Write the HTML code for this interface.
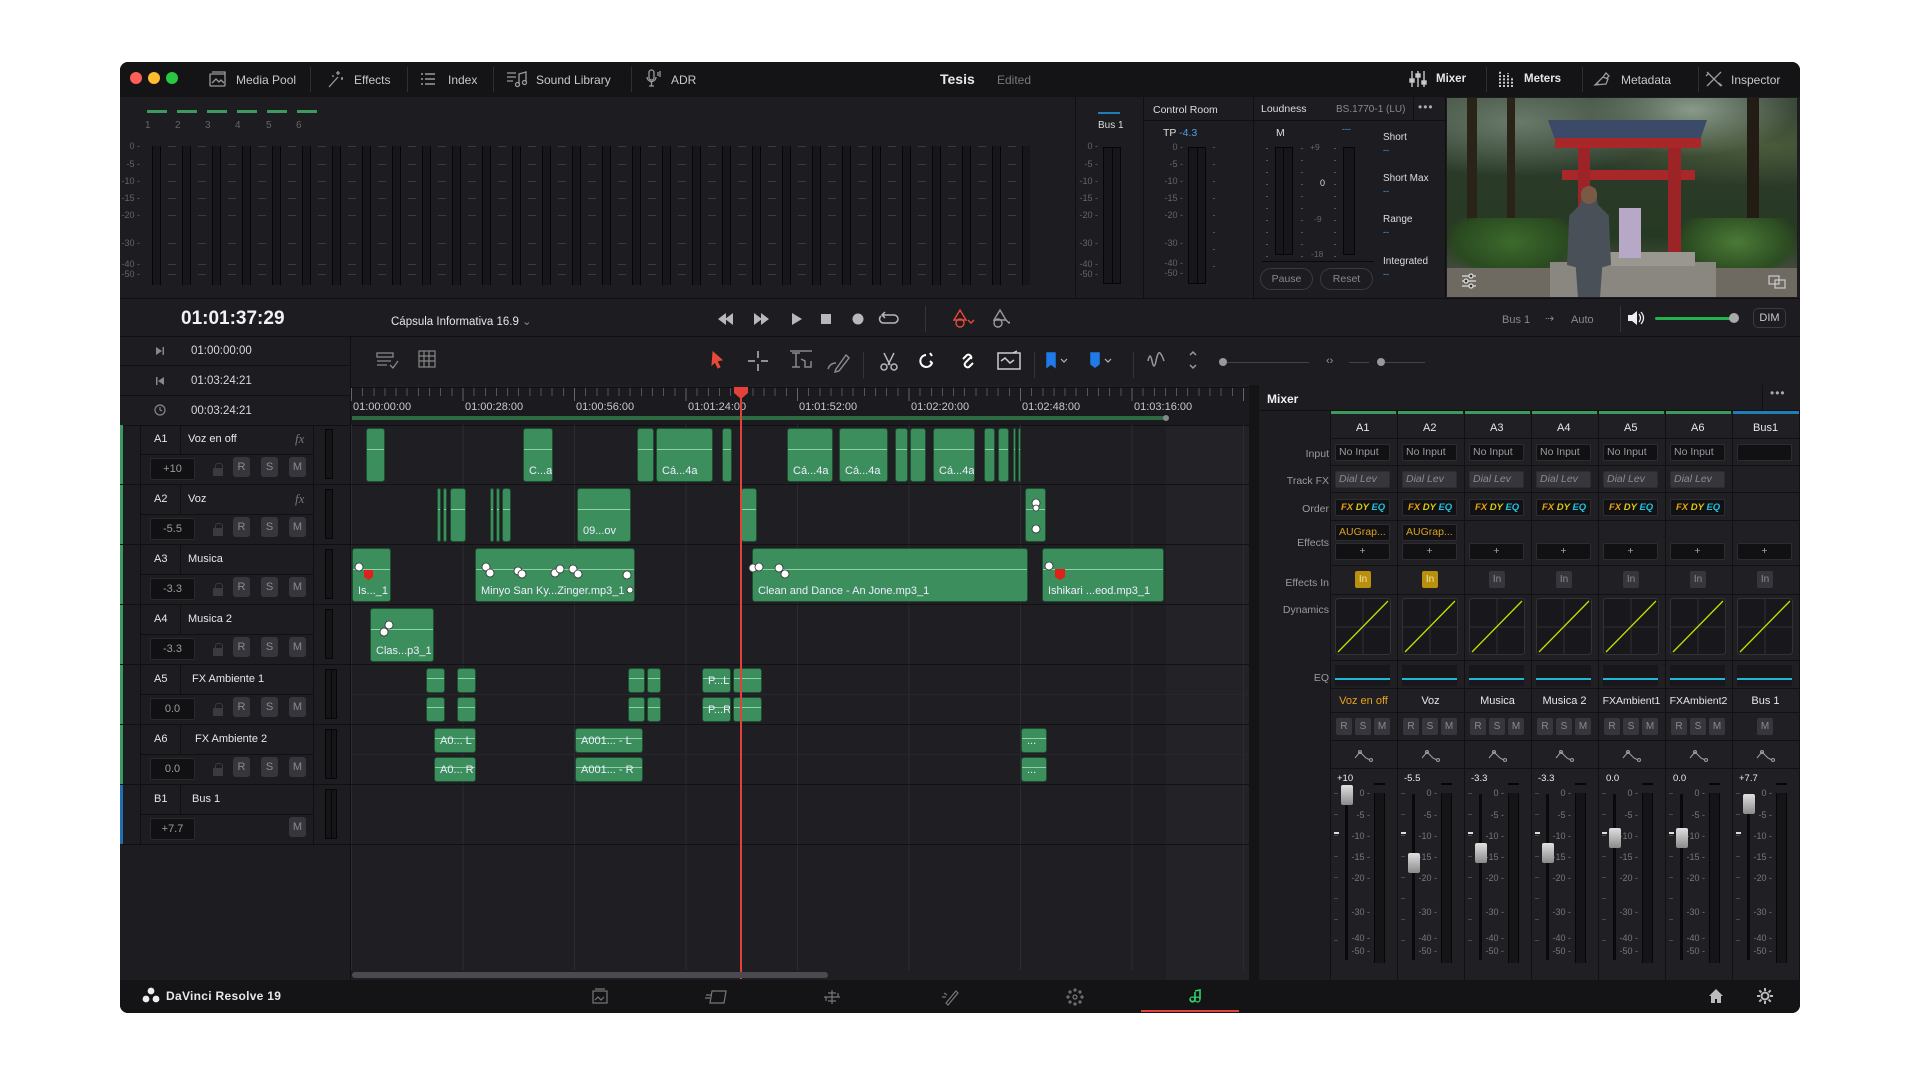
<!DOCTYPE html>
<html><head><meta charset="utf-8">
<style>
*{margin:0;padding:0;box-sizing:border-box}
body{width:1920px;height:1080px;background:#fff;position:relative;overflow:hidden;font-family:"Liberation Sans",sans-serif;color:#c8c8cc;font-size:12px}
.a{position:absolute}
.win{left:120px;top:62px;width:1680px;height:951px;background:#1c1c21;border-radius:8px;overflow:hidden}
.t{position:absolute;white-space:nowrap}
.sep{position:absolute;width:1px;background:#2e2e34}
.hl{position:absolute;height:1px;background:#101013}
.c{position:absolute;background:#3c8e5d;border:1px solid #1d4f31;border-radius:3px;overflow:hidden}
.c::before{content:"";position:absolute;left:0;right:0;top:38%;height:1px;background:#8fd2a8}
.c span{position:absolute;left:5px;bottom:4px;color:#eef;font-size:11px;white-space:nowrap}
.btn{position:absolute;width:17px;height:20px;background:#36363c;border-radius:3px;color:#8a8a90;font-size:11px;text-align:center;line-height:20px}
.vol{position:absolute;width:45px;height:22px;background:#111114;border:1px solid #2a2a2e;border-radius:2px;color:#9a9aa0;font-size:11px;text-align:center;line-height:20px}
.lk{position:absolute;width:10px;height:8px;background:#3a3a40;border-radius:1px}
.lk::before{content:"";position:absolute;left:2px;top:-5px;width:6px;height:6px;border:1.5px solid #3a3a40;border-bottom:none;border-radius:3px 3px 0 0}
.mb{position:absolute;left:5px;width:55px;height:17px;background:#111114;border:1px solid #2c2c31;border-radius:2px;font-size:10.5px;line-height:15px;padding-left:3px;color:#9a9aa0;white-space:nowrap;overflow:hidden}
.lab{position:absolute;right:0;width:70px;text-align:right;font-size:10.5px;color:#9a9aa0}
.rs{position:absolute;width:16px;height:17px;background:#36363c;border-radius:2px;font-size:10px;color:#8a8a90;text-align:center;line-height:17px}
.sc{position:absolute;font-size:9px;color:#77777d;text-align:right;width:22px}
.dl{position:absolute;height:1px;background:repeating-linear-gradient(90deg,transparent 0 16px,#3a3a40 16px 24px,transparent 24px 30px)}
</style></head><body>
<div class="a win">
<!-- title bar -->
<div class="a" style="left:0;top:0;width:1680px;height:35px;background:#141417"></div>
<div class="a" style="left:10px;top:10px;width:12px;height:12px;border-radius:6px;background:#fe5f57"></div>
<div class="a" style="left:28px;top:10px;width:12px;height:12px;border-radius:6px;background:#febc2e"></div>
<div class="a" style="left:46px;top:10px;width:12px;height:12px;border-radius:6px;background:#28c840"></div>
<svg class="a" style="left:88px;top:8px" width="20" height="18" viewBox="0 0 20 18" fill="none" stroke="#9a9aa0" stroke-width="1.3"><rect x="2" y="4" width="15" height="12" rx="1"/><path d="M4 2h13v2M4 13l4-4 3 3 2-2 3 3"/></svg>
<div class="t" style="left:116px;top:11px;font-size:12px">Media Pool</div>
<div class="sep" style="left:190px;top:5px;height:25px"></div>
<svg class="a" style="left:206px;top:7px" width="20" height="20" viewBox="0 0 20 20" fill="none" stroke="#9a9aa0" stroke-width="1.3"><path d="M3 18l9-10M12 2v4M10 4h4M16 8v3M15 9.5h2M7 6v2"/></svg>
<div class="t" style="left:234px;top:11px">Effects</div>
<div class="sep" style="left:287px;top:5px;height:25px"></div>
<svg class="a" style="left:300px;top:9px" width="16" height="16" viewBox="0 0 16 16" stroke="#9a9aa0" stroke-width="1.4"><path d="M1 3h2M1 8h2M1 13h2M5 3h10M5 8h10M5 13h10"/></svg>
<div class="t" style="left:328px;top:11px">Index</div>
<div class="sep" style="left:373px;top:5px;height:25px"></div>
<svg class="a" style="left:386px;top:8px" width="22" height="18" viewBox="0 0 22 18" fill="none" stroke="#9a9aa0" stroke-width="1.3"><path d="M1 3h9M1 7h9M1 11h6M13 14V4l7-2v10"/><circle cx="11.5" cy="14.5" r="2"/><circle cx="18.5" cy="12.5" r="2"/></svg>
<div class="t" style="left:416px;top:11px">Sound Library</div>
<div class="sep" style="left:511px;top:5px;height:25px"></div>
<svg class="a" style="left:524px;top:6px" width="20" height="22" viewBox="0 0 20 22" fill="none" stroke="#9a9aa0" stroke-width="1.3"><rect x="5" y="2" width="5" height="10" rx="2.5"/><path d="M3 9a4.5 4.5 0 009 0M7.5 14v4M5 18h5M14 4v4M16 3v6"/></svg>
<div class="t" style="left:551px;top:11px">ADR</div>
<div class="t" style="left:820px;top:9px;font-size:14px;font-weight:bold;color:#e8e8ea">Tesis</div>
<div class="t" style="left:877px;top:11px;color:#77777d">Edited</div>
<svg class="a" style="left:1289px;top:8px" width="18" height="18" viewBox="0 0 18 18" stroke="#c8c8cc" stroke-width="1.4" fill="#c8c8cc"><path d="M3 1v16M9 1v16M15 1v16"/><rect x="1" y="9" width="4" height="3"/><rect x="7" y="4" width="4" height="3"/><rect x="13" y="11" width="4" height="3"/></svg>
<div class="t" style="left:1316px;top:11px;color:#e8e8ea;font-weight:bold;font-size:11.5px">Mixer</div>
<div class="sep" style="left:1366px;top:5px;height:25px"></div>
<svg class="a" style="left:1377px;top:8px" width="18" height="18" viewBox="0 0 18 18" stroke="#c8c8cc" stroke-width="2" stroke-dasharray="2 1.3"><path d="M3 17V1M7 17V5M11 17V3M15 17V7"/></svg>
<div class="t" style="left:1404px;top:11px;color:#e8e8ea;font-weight:bold;font-size:11.5px">Meters</div>
<div class="sep" style="left:1462px;top:5px;height:25px"></div>
<svg class="a" style="left:1472px;top:8px" width="20" height="18" viewBox="0 0 20 18" fill="none" stroke="#9a9aa0" stroke-width="1.3"><path d="M3 15l8-8 5 2-2 5zM11 7l3-4 3 3-3 3M3 15l4-1"/></svg>
<div class="t" style="left:1501px;top:11px">Metadata</div>
<div class="sep" style="left:1578px;top:5px;height:25px"></div>
<svg class="a" style="left:1584px;top:8px" width="20" height="18" viewBox="0 0 20 18" fill="none" stroke="#9a9aa0" stroke-width="1.3"><path d="M3 2l14 14M17 2L3 16M2 6l3-3M15 13l3 3"/></svg>
<div class="t" style="left:1611px;top:11px">Inspector</div>

<!-- meters panel -->
<div class="a" style="left:0;top:236px;width:1680px;height:1px;background:#101013"></div>
<div class="a" style="left:27px;top:48px;width:174px;height:3px;background:repeating-linear-gradient(90deg,#3c9a5e 0 20px,transparent 20px 30px)"></div>
<div class="t" style="left:25px;top:58px;font-size:10px;color:#666">1</div>
<div class="t" style="left:55px;top:58px;font-size:10px;color:#666">2</div>
<div class="t" style="left:85px;top:58px;font-size:10px;color:#666">3</div>
<div class="t" style="left:115px;top:58px;font-size:10px;color:#666">4</div>
<div class="t" style="left:146px;top:58px;font-size:10px;color:#666">5</div>
<div class="t" style="left:176px;top:58px;font-size:10px;color:#666">6</div>
<div class="a" style="left:32px;top:84px;width:878px;height:139px;background:repeating-linear-gradient(90deg,#060608 0 1px,#17171b 1px 8px,#060608 8px 9px,transparent 9px 30px)"></div>
<div class="a" style="left:0;top:80px;width:20px;font-size:9px;color:#666;line-height:1">
<div class="a" style="top:0;right:0">0 -</div><div class="a" style="top:18px;right:0">-5 -</div><div class="a" style="top:35px;right:0">-10 -</div><div class="a" style="top:52px;right:0">-15 -</div><div class="a" style="top:69px;right:0">-20 -</div><div class="a" style="top:97px;right:0">-30 -</div><div class="a" style="top:118px;right:0">-40 -</div><div class="a" style="top:128px;right:0">-50 -</div></div>
<div class="dl" style="left:32px;top:84px;width:878px"></div>
<div class="dl" style="left:32px;top:102px;width:878px"></div>
<div class="dl" style="left:32px;top:119px;width:878px"></div>
<div class="dl" style="left:32px;top:136px;width:878px"></div>
<div class="dl" style="left:32px;top:153px;width:878px"></div>
<div class="dl" style="left:32px;top:181px;width:878px"></div>
<div class="dl" style="left:32px;top:202px;width:878px"></div>
<div class="dl" style="left:32px;top:212px;width:878px"></div>
<!-- section dividers -->
<div class="a" style="left:955px;top:35px;width:1px;height:201px;background:#101013"></div>
<div class="a" style="left:1023px;top:35px;width:1px;height:201px;background:#101013"></div>
<div class="a" style="left:1133px;top:35px;width:1px;height:201px;background:#101013"></div>
<div class="a" style="left:1325px;top:35px;width:1px;height:201px;background:#101013"></div>
<!-- bus1 -->
<div class="a" style="left:978px;top:50px;width:22px;height:2px;background:#1f7db8"></div>
<div class="t" style="left:978px;top:58px;font-size:10px;color:#ddd">Bus 1</div>
<div class="a" style="left:956px;top:80px;font-size:9px;color:#666;line-height:1;width:22px">
<div class="a" style="top:0;right:0">0 -</div><div class="a" style="top:18px;right:0">-5 -</div><div class="a" style="top:35px;right:0">-10 -</div><div class="a" style="top:52px;right:0">-15 -</div><div class="a" style="top:69px;right:0">-20 -</div><div class="a" style="top:97px;right:0">-30 -</div><div class="a" style="top:118px;right:0">-40 -</div><div class="a" style="top:128px;right:0">-50 -</div></div>
<div class="a" style="left:983px;top:85px;width:18px;height:137px;border:1px solid #060608;background:linear-gradient(90deg,#17171b 0 8px,#060608 8px 9px,#17171b 9px)"></div>
<!-- control room -->
<div class="a" style="left:1024px;top:58px;width:301px;height:1px;background:#101013"></div>
<div class="a" style="left:1293px;top:35px;width:1px;height:23px;background:#101013"></div>
<div class="t" style="left:1033px;top:42px;font-size:10.5px;color:#ddd">Control Room</div>
<div class="t" style="left:1141px;top:41px;font-size:10.5px;color:#ddd">Loudness</div>
<div class="t" style="left:1216px;top:42px;font-size:10px;color:#88888e">BS.1770-1 (LU)</div>
<div class="t" style="left:1298px;top:38px;font-size:12px;color:#aaa;letter-spacing:1px">•••</div>
<div class="t" style="left:1043px;top:65px;font-size:10.5px;color:#ddd">TP <span style="color:#4f9ef0">-4.3</span></div>
<div class="a" style="left:1041px;top:81px;font-size:9px;color:#666;line-height:1;width:22px">
<div class="a" style="top:0;right:0">0 -</div><div class="a" style="top:17px;right:0">-5 -</div><div class="a" style="top:34px;right:0">-10 -</div><div class="a" style="top:51px;right:0">-15 -</div><div class="a" style="top:68px;right:0">-20 -</div><div class="a" style="top:96px;right:0">-30 -</div><div class="a" style="top:116px;right:0">-40 -</div><div class="a" style="top:126px;right:0">-50 -</div></div>
<div class="a" style="left:1068px;top:85px;width:18px;height:137px;border:1px solid #060608;background:linear-gradient(90deg,#17171b 0 8px,#060608 8px 9px,#17171b 9px)"></div>
<div class="a" style="left:1093px;top:85px;width:2px;height:130px;background:repeating-linear-gradient(180deg,#555 0 1px,transparent 1px 17px)"></div>
<!-- loudness -->
<div class="t" style="left:1156px;top:65px;font-size:10.5px;color:#ddd">M</div>
<div class="a" style="left:1155px;top:85px;width:18px;height:108px;border:1px solid #060608;background:linear-gradient(90deg,#17171b 0 7px,#060608 7px 8px,#17171b 8px)"></div>
<div class="a" style="left:1223px;top:85px;width:12px;height:108px;border:1px solid #060608;background:#17171b"></div>
<div class="t" style="left:1222px;top:62px;font-size:9px;color:#4f9ef0">---</div>
<div class="t" style="left:1190px;top:80px;font-size:8.5px;color:#666">+9</div>
<div class="t" style="left:1200px;top:116px;font-size:9px;color:#ddd">0</div>
<div class="t" style="left:1194px;top:152px;font-size:8.5px;color:#666">-9</div>
<div class="t" style="left:1191px;top:187px;font-size:8.5px;color:#666">-18</div>
<div class="a" style="left:1146px;top:86px;width:2px;height:110px;background:repeating-linear-gradient(180deg,#555 0 1px,transparent 1px 12px)"></div>
<div class="a" style="left:1181px;top:86px;width:2px;height:110px;background:repeating-linear-gradient(180deg,#555 0 1px,transparent 1px 12px)"></div>
<div class="a" style="left:1214px;top:86px;width:2px;height:110px;background:repeating-linear-gradient(180deg,#555 0 1px,transparent 1px 12px)"></div>
<div class="a" style="left:1142px;top:199px;width:112px;height:1px;background:#0a0a0c"></div>
<div class="a" style="left:1140px;top:206px;width:53px;height:22px;border:1px solid #3a3a40;border-radius:11px;color:#88888e;font-size:10.5px;text-align:center;line-height:20px">Pause</div>
<div class="a" style="left:1200px;top:206px;width:53px;height:22px;border:1px solid #3a3a40;border-radius:11px;color:#88888e;font-size:10.5px;text-align:center;line-height:20px">Reset</div>
<div class="t" style="left:1263px;top:70px;font-size:10px;color:#ddd">Short</div>
<div class="t" style="left:1263px;top:83px;font-size:9px;color:#4f9ef0">--</div>
<div class="t" style="left:1263px;top:111px;font-size:10px;color:#ddd">Short Max</div>
<div class="t" style="left:1263px;top:124px;font-size:9px;color:#4f9ef0">--</div>
<div class="t" style="left:1263px;top:152px;font-size:10px;color:#ddd">Range</div>
<div class="t" style="left:1263px;top:165px;font-size:9px;color:#4f9ef0">--</div>
<div class="t" style="left:1263px;top:194px;font-size:10px;color:#ddd">Integrated</div>
<div class="t" style="left:1263px;top:207px;font-size:9px;color:#4f9ef0">--</div>
<!-- video -->
<div class="a" style="left:1327px;top:36px;width:350px;height:199px;overflow:hidden;background:linear-gradient(180deg,#3b4a3a 0%,#2a3a28 40%,#263a22 70%,#5a5a52 100%)">
<div class="a" style="left:0;top:0;width:350px;height:120px;background:radial-gradient(ellipse at 20% 20%,#6a7a6a 0,transparent 40%),radial-gradient(ellipse at 70% 10%,#8a9a8a 0,transparent 30%),radial-gradient(ellipse at 90% 40%,#4a5a3a 0,transparent 40%)"></div>
<div class="a" style="left:20px;top:0;width:10px;height:150px;background:#2a2418"></div>
<div class="a" style="left:60px;top:0;width:8px;height:130px;background:#2a2418"></div>
<div class="a" style="left:300px;top:0;width:12px;height:150px;background:#221c14"></div>
<div class="a" style="left:0;top:120px;width:130px;height:60px;background:radial-gradient(ellipse at 50% 40%,#3c6a2c 0,#2a4a20 60%,transparent 75%)"></div>
<div class="a" style="left:230px;top:120px;width:120px;height:60px;background:radial-gradient(ellipse at 50% 40%,#4a7a36 0,#2c4c22 60%,transparent 75%)"></div>
<div class="a" style="left:0;top:170px;width:350px;height:29px;background:#6e6a62"></div>
<div class="a" style="left:101px;top:22px;width:159px;height:18px;background:#3a4a68;clip-path:polygon(0 0,100% 0,96% 100%,4% 100%)"></div>
<div class="a" style="left:108px;top:40px;width:146px;height:10px;background:#a8282a"></div>
<div class="a" style="left:115px;top:72px;width:133px;height:10px;background:#a8282a"></div>
<div class="a" style="left:131px;top:50px;width:12px;height:130px;background:#9c2426"></div>
<div class="a" style="left:221px;top:50px;width:13px;height:130px;background:#9c2426"></div>
<div class="a" style="left:103px;top:164px;width:166px;height:35px;background:#8a8680"></div>
<div class="a" style="left:128px;top:154px;width:120px;height:14px;background:#9a9690"></div>
<div class="a" style="left:120px;top:90px;width:44px;height:110px;background:#4a5058;clip-path:polygon(35% 0,65% 0,70% 15%,95% 25%,100% 70%,80% 72%,75% 100%,25% 100%,20% 72%,0 70%,5% 25%,30% 15%)"></div>
<div class="a" style="left:134px;top:88px;width:16px;height:18px;border-radius:8px;background:#7a5a44"></div>
<div class="a" style="left:172px;top:110px;width:22px;height:50px;background:#b8a8c8"></div>
</div>
<svg class="a" style="left:1340px;top:210px" width="18" height="18" viewBox="0 0 18 18" stroke="#ddd" stroke-width="1.3" fill="none"><path d="M2 4h14M2 9h14M2 14h14"/><circle cx="11" cy="4" r="2" fill="#333"/><circle cx="6" cy="9" r="2" fill="#333"/><circle cx="11" cy="14" r="2" fill="#333"/></svg>
<svg class="a" style="left:1648px;top:213px" width="18" height="14" viewBox="0 0 18 14" stroke="#ccc" stroke-width="1.2" fill="none"><rect x="1" y="1" width="10" height="8"/><rect x="7" y="5" width="10" height="8"/></svg>

<!-- transport row -->
<div class="a" style="left:0;top:274px;width:1680px;height:1px;background:#101013"></div>
<div class="t" style="left:61px;top:246px;font-size:19px;color:#f2f2f4;font-weight:bold">01:01:37:29</div>
<div class="t" style="left:271px;top:252px;font-size:11.5px;color:#e6e6e8">Cápsula Informativa 16.9 <span style="color:#888">⌄</span></div>
<svg class="a" style="left:596px;top:246px" width="190" height="22" viewBox="0 0 190 22" fill="#b8b8bc"><path d="M2 11l8-6v12zM9 11l8-6v12z"/><path d="M38 5l8 6-8 6zM45 5l8 6-8 6z"/><path d="M76 5l10 6-10 6z"/><rect x="105" y="6" width="10" height="10"/><circle cx="142" cy="11" r="5.5"/><path d="M167 7h11a4 4 0 010 8h-11a4 4 0 01-2-7" fill="none" stroke="#b8b8bc" stroke-width="1.5"/><path d="M169 4l-3 3 3 3" fill="none" stroke="#b8b8bc" stroke-width="1.5"/></svg>
<div class="sep" style="left:805px;top:244px;height:26px;background:#34343a"></div>
<svg class="a" style="left:830px;top:244px" width="60" height="24" viewBox="0 0 60 24" fill="none" stroke-width="1.4"><path d="M10 4l6 10H4z" stroke="#e84a3a"/><circle cx="10" cy="17" r="4" stroke="#e84a3a"/><path d="M18 14l3 3 3-3" stroke="#e84a3a"/><path d="M50 4l6 10H44z" stroke="#9a9aa0"/><circle cx="48" cy="17" r="4" stroke="#9a9aa0"/><path d="M56 14l3 3 3-3" stroke="#9a9aa0"/></svg>
<div class="t" style="left:1382px;top:252px;font-size:11px;color:#88888e">Bus 1</div>
<div class="t" style="left:1425px;top:250px;font-size:11px;color:#88888e">⇢</div>
<div class="t" style="left:1451px;top:252px;font-size:11px;color:#88888e">Auto</div>
<div class="sep" style="left:1500px;top:244px;height:26px;background:#34343a"></div>
<svg class="a" style="left:1507px;top:248px" width="18" height="16" viewBox="0 0 18 16" fill="#eee"><path d="M1 5h4l5-4v14l-5-4H1z"/><path d="M12 4q3 4 0 8M14 2q5 6 0 12" stroke="#eee" fill="none" stroke-width="1.3"/></svg>
<div class="a" style="left:1535px;top:255px;width:76px;height:3px;background:#23b34a;border-radius:2px"></div>
<div class="a" style="left:1609px;top:251px;width:10px;height:10px;border-radius:5px;background:#aaa"></div>
<div class="a" style="left:1633px;top:246px;width:33px;height:20px;border:1px solid #3a3a40;border-radius:5px;font-size:11px;color:#ccc;text-align:center;line-height:18px">DIM</div>

<!-- left header column -->
<div class="a" style="left:0;top:275px;width:231px;height:643px;background:#1c1c21"></div>
<div class="a" style="left:230px;top:275px;width:1px;height:643px;background:#101013"></div>
<div class="hl" style="left:0;top:303px;width:231px"></div>
<div class="hl" style="left:0;top:333px;width:231px"></div>
<div class="hl" style="left:0;top:363px;width:231px"></div>
<svg class="a" style="left:35px;top:284px" width="10" height="10" viewBox="0 0 10 10" fill="#888"><path d="M1 1l6 4-6 4z"/><rect x="7.5" y="1" width="1.5" height="8"/></svg>
<div class="t" style="left:71px;top:283px;font-size:11.5px;color:#d8d8dc">01:00:00:00</div>
<svg class="a" style="left:35px;top:314px" width="10" height="10" viewBox="0 0 10 10" fill="#888"><rect x="1" y="1" width="1.5" height="8"/><path d="M9 1L3 5l6 4z"/></svg>
<div class="t" style="left:71px;top:313px;font-size:11.5px;color:#d8d8dc">01:03:24:21</div>
<svg class="a" style="left:34px;top:342px" width="12" height="12" viewBox="0 0 12 12" fill="none" stroke="#888" stroke-width="1.2"><circle cx="6" cy="6" r="5"/><path d="M6 3v3l2 1"/></svg>
<div class="t" style="left:71px;top:343px;font-size:11.5px;color:#d8d8dc">00:03:24:21</div>

<div class="a" style="left:0;top:363px;width:3px;height:360px;background:#3c9a5e"></div>
<div class="a" style="left:0;top:723px;width:3px;height:60px;background:#1f6fb0"></div>
<div class="hl" style="left:0;top:422px;width:231px"></div><div class="hl" style="left:0;top:482px;width:231px"></div><div class="hl" style="left:0;top:542px;width:231px"></div><div class="hl" style="left:0;top:602px;width:231px"></div><div class="hl" style="left:0;top:662px;width:231px"></div><div class="hl" style="left:0;top:722px;width:231px"></div><div class="hl" style="left:0;top:782px;width:231px"></div>
<div class="a" style="left:0;top:363px">
 <div class="a" style="left:20px;top:0;width:1px;height:420px;background:#101013"></div>
 <div class="a" style="left:193px;top:0;width:1px;height:420px;background:#101013"></div>
 <div class="a" style="left:60px;top:0;width:1px;height:420px;background:repeating-linear-gradient(180deg,#101013 0 30px,transparent 30px 60px)"></div>
 <div class="a" style="left:20px;top:29px;width:173px;height:1px;background:#101013"></div>
 <div class="a" style="left:20px;top:89px;width:173px;height:1px;background:#101013"></div>
 <div class="a" style="left:20px;top:149px;width:173px;height:1px;background:#101013"></div>
 <div class="a" style="left:20px;top:209px;width:173px;height:1px;background:#101013"></div>
 <div class="a" style="left:20px;top:269px;width:173px;height:1px;background:#101013"></div>
 <div class="a" style="left:20px;top:329px;width:173px;height:1px;background:#101013"></div>
 <div class="a" style="left:20px;top:389px;width:173px;height:1px;background:#101013"></div>
</div>
<div class="a" style="left:205px;top:367px;width:8px;height:50px;border:1px solid #060608;background:#151518"></div>
<div class="a" style="left:205px;top:427px;width:8px;height:50px;border:1px solid #060608;background:#151518"></div>
<div class="a" style="left:205px;top:487px;width:8px;height:50px;border:1px solid #060608;background:#151518"></div>
<div class="a" style="left:205px;top:547px;width:8px;height:50px;border:1px solid #060608;background:#151518"></div>
<div class="a" style="left:205px;top:607px;width:12px;height:50px;border:1px solid #060608;background:linear-gradient(90deg,#151518 0 5px,#060608 5px 6px,#151518 6px)"></div>
<div class="a" style="left:205px;top:667px;width:12px;height:50px;border:1px solid #060608;background:linear-gradient(90deg,#151518 0 5px,#060608 5px 6px,#151518 6px)"></div>
<div class="a" style="left:205px;top:727px;width:12px;height:50px;border:1px solid #060608;background:linear-gradient(90deg,#151518 0 5px,#060608 5px 6px,#151518 6px)"></div>
<div class="t" style="left:34px;top:371px;font-size:11px;color:#e8e8ea">A1</div><div class="t" style="left:68px;top:371px;font-size:11px;color:#e8e8ea">Voz en off</div><div class="t" style="left:175px;top:369px;font-size:13px;color:#777;font-style:italic;font-family:'Liberation Serif',serif">fx</div>
<div class="t" style="left:34px;top:431px;font-size:11px;color:#e8e8ea">A2</div><div class="t" style="left:68px;top:431px;font-size:11px;color:#e8e8ea">Voz</div><div class="t" style="left:175px;top:429px;font-size:13px;color:#777;font-style:italic;font-family:'Liberation Serif',serif">fx</div>
<div class="t" style="left:34px;top:491px;font-size:11px;color:#e8e8ea">A3</div><div class="t" style="left:68px;top:491px;font-size:11px;color:#e8e8ea">Musica</div>
<div class="t" style="left:34px;top:551px;font-size:11px;color:#e8e8ea">A4</div><div class="t" style="left:68px;top:551px;font-size:11px;color:#e8e8ea">Musica 2</div>
<div class="t" style="left:34px;top:611px;font-size:11px;color:#e8e8ea">A5</div><div class="t" style="left:72px;top:611px;font-size:11px;color:#e8e8ea">FX Ambiente 1</div>
<div class="t" style="left:34px;top:671px;font-size:11px;color:#e8e8ea">A6</div><div class="t" style="left:75px;top:671px;font-size:11px;color:#e8e8ea">FX Ambiente 2</div>
<div class="t" style="left:34px;top:731px;font-size:11px;color:#e8e8ea">B1</div><div class="t" style="left:72px;top:731px;font-size:11px;color:#e8e8ea">Bus 1</div>
<div class="vol" style="left:30px;top:396px">+10</div><div class="lk" style="left:93px;top:406px"></div><div class="btn" style="left:113px;top:395px">R</div><div class="btn" style="left:141px;top:395px">S</div><div class="btn" style="left:169px;top:395px">M</div>
<div class="vol" style="left:30px;top:456px">-5.5</div><div class="lk" style="left:93px;top:466px"></div><div class="btn" style="left:113px;top:455px">R</div><div class="btn" style="left:141px;top:455px">S</div><div class="btn" style="left:169px;top:455px">M</div>
<div class="vol" style="left:30px;top:516px">-3.3</div><div class="lk" style="left:93px;top:526px"></div><div class="btn" style="left:113px;top:515px">R</div><div class="btn" style="left:141px;top:515px">S</div><div class="btn" style="left:169px;top:515px">M</div>
<div class="vol" style="left:30px;top:576px">-3.3</div><div class="lk" style="left:93px;top:586px"></div><div class="btn" style="left:113px;top:575px">R</div><div class="btn" style="left:141px;top:575px">S</div><div class="btn" style="left:169px;top:575px">M</div>
<div class="vol" style="left:30px;top:636px">0.0</div><div class="lk" style="left:93px;top:646px"></div><div class="btn" style="left:113px;top:635px">R</div><div class="btn" style="left:141px;top:635px">S</div><div class="btn" style="left:169px;top:635px">M</div>
<div class="vol" style="left:30px;top:696px">0.0</div><div class="lk" style="left:93px;top:706px"></div><div class="btn" style="left:113px;top:695px">R</div><div class="btn" style="left:141px;top:695px">S</div><div class="btn" style="left:169px;top:695px">M</div>
<div class="vol" style="left:30px;top:756px">+7.7</div><div class="btn" style="left:169px;top:755px">M</div>

<!-- timeline -->
<div class="a" style="left:231px;top:275px;width:1449px;height:48px;background:#1c1c21"></div>
<div class="a" style="left:231px;top:323px;width:898px;height:595px;background:#1e1e23"></div>
<div class="a" style="left:1046px;top:363px;width:83px;height:555px;background:#222227"></div>
<div class="a" style="left:231px;top:325px;width:898px;height:38px;background:#1a1a1f"></div>
<div class="a" style="left:231px;top:325px;width:898px;height:1px;background:#101013"></div>
<div class="a" style="left:231px;top:326px;width:898px;height:8px;background:repeating-linear-gradient(90deg,#555 0 1px,transparent 1px 11.15px)"></div>
<div class="a" style="left:231px;top:326px;width:898px;height:13px;background:repeating-linear-gradient(90deg,#666 0 1px,transparent 1px 111.5px)"></div>
<div class="t" style="left:233px;top:339px;font-size:11px;color:#c8c8cc">01:00:00:00</div>
<div class="t" style="left:345px;top:339px;font-size:11px;color:#c8c8cc">01:00:28:00</div>
<div class="t" style="left:456px;top:339px;font-size:11px;color:#c8c8cc">01:00:56:00</div>
<div class="t" style="left:568px;top:339px;font-size:11px;color:#c8c8cc">01:01:24:00</div>
<div class="t" style="left:679px;top:339px;font-size:11px;color:#c8c8cc">01:01:52:00</div>
<div class="t" style="left:791px;top:339px;font-size:11px;color:#c8c8cc">01:02:20:00</div>
<div class="t" style="left:902px;top:339px;font-size:11px;color:#c8c8cc">01:02:48:00</div>
<div class="t" style="left:1014px;top:339px;font-size:11px;color:#c8c8cc">01:03:16:00</div>
<div class="a" style="left:232px;top:354px;width:814px;height:4px;background:#2f6b42"></div>
<div class="a" style="left:1043px;top:353px;width:6px;height:6px;border-radius:3px;background:#888"></div>
<div class="a" style="left:231px;top:363px;width:898px;height:1px;background:#101013"></div>
<div class="a" style="left:231px;top:363px;width:900px;height:545px;background:repeating-linear-gradient(90deg,#2c2c32 0 1px,transparent 1px 111.5px)"></div>
<div class="a" style="left:231px;top:422px;width:898px;height:1px;background:#121215"></div>
<div class="a" style="left:231px;top:482px;width:898px;height:1px;background:#121215"></div>
<div class="a" style="left:231px;top:542px;width:898px;height:1px;background:#121215"></div>
<div class="a" style="left:231px;top:602px;width:898px;height:1px;background:#121215"></div>
<div class="a" style="left:231px;top:632px;width:898px;height:1px;background:#26262b"></div>
<div class="a" style="left:231px;top:662px;width:898px;height:1px;background:#121215"></div>
<div class="a" style="left:231px;top:692px;width:898px;height:1px;background:#26262b"></div>
<div class="a" style="left:231px;top:722px;width:898px;height:1px;background:#121215"></div>
<div class="a" style="left:231px;top:782px;width:898px;height:1px;background:#121215"></div>
<!-- toolbar icons -->
<svg class="a" style="left:256px;top:290px" width="24" height="18" viewBox="0 0 24 18" fill="none" stroke="#888" stroke-width="1.3"><rect x="1" y="1" width="16" height="4"/><path d="M1 9h14M1 13h10M14 13l3 3 5-7"/></svg>
<svg class="a" style="left:298px;top:288px" width="18" height="18" viewBox="0 0 18 18" fill="none" stroke="#888" stroke-width="1.2"><rect x="1" y="1" width="16" height="16"/><path d="M1 6h16M1 11h16M6 1v16M11 1v16"/></svg>
<svg class="a" style="left:588px;top:287px" width="520" height="24" viewBox="0 0 520 24" fill="none" stroke="#b8b8bc" stroke-width="1.5">
<path d="M5 3l9 8-5 1 3 6-2 1-3-6-3 3z" fill="#e84a3a" stroke="#e84a3a" stroke-width="1"/>
<path d="M50 2v7M50 15v7M40 12h7M53 12h7"/>
<path d="M84 4h8M88 4v14M84 18h8M93 10l4 2v6h6v-6M82 2h22" stroke="#888"/>
<path d="M128 20l10-14 3 3-10 13-4 1zM120 20q2-6 8-6" stroke="#888"/>
<path d="M176 4l6 12M186 4l-6 12"/><circle cx="176" cy="18" r="3"/><circle cx="186" cy="18" r="3"/>
<path d="M218 6a6 6 0 106 8l-2-2M222 4l2 3" stroke="#fff" stroke-width="2"/>
<path d="M257 14l6-6M255 10l4-4a3 3 0 014 4M265 14l-4 4a3 3 0 01-4-4" stroke="#fff" stroke-width="2"/>
<rect x="290" y="4" width="22" height="16" stroke="#ccc"/><path d="M293 12l4-3 5 5 4-3M305 4l4-2" stroke="#ccc"/>
<path d="M339 4h8v14l-4-3-4 3z" fill="#1e7be8" stroke="#1e7be8"/><path d="M353 10l3 3 3-3" stroke-width="1.2"/>
<path d="M383 4h8v11l-4 3-4-3z" fill="#1e7be8" stroke="#1e7be8"/><path d="M397 10l3 3 3-3" stroke-width="1.2"/>
<path d="M440 12q2-10 4 0t4 0 4-8 4 8" stroke="#999"/>
<path d="M482 6l3-3 3 3M482 16l3 3 3-3" stroke="#999"/>
</svg>
<div class="sep" style="left:743px;top:290px;height:26px;background:#34343a"></div>
<div class="sep" style="left:914px;top:290px;height:26px;background:#34343a"></div>
<div class="sep" style="left:1013px;top:290px;height:26px;background:#34343a"></div>
<div class="a" style="left:1099px;top:296px;width:8px;height:8px;border-radius:4px;background:#999"></div>
<div class="a" style="left:1107px;top:300px;width:82px;height:1px;background:#444"></div>
<div class="t" style="left:1206px;top:293px;font-size:11px;color:#999">‹›</div>
<div class="a" style="left:1257px;top:296px;width:8px;height:8px;border-radius:4px;background:#999"></div>
<div class="a" style="left:1265px;top:300px;width:40px;height:1px;background:#444"></div>
<div class="a" style="left:1229px;top:300px;width:20px;height:1px;background:#444"></div>

<!-- clips A1 -->
<div class="c" style="left:246px;top:366px;width:19px;height:54px"></div>
<div class="c" style="left:403px;top:366px;width:30px;height:54px"><span>C...a</span></div>
<div class="c" style="left:517px;top:366px;width:17px;height:54px"></div>
<div class="c" style="left:536px;top:366px;width:57px;height:54px"><span>Cá...4a</span></div>
<div class="c" style="left:602px;top:366px;width:10px;height:54px"></div>
<div class="c" style="left:667px;top:366px;width:46px;height:54px"><span>Cá...4a</span></div>
<div class="c" style="left:719px;top:366px;width:49px;height:54px"><span>Cá...4a</span></div>
<div class="c" style="left:775px;top:366px;width:13px;height:54px"></div>
<div class="c" style="left:790px;top:366px;width:16px;height:54px"></div>
<div class="c" style="left:813px;top:366px;width:42px;height:54px"><span>Cá...4a</span></div>
<div class="c" style="left:864px;top:366px;width:11px;height:54px"></div>
<div class="c" style="left:878px;top:366px;width:11px;height:54px"></div>
<div class="c" style="left:893px;top:366px;width:3px;height:54px"></div>
<div class="c" style="left:898px;top:366px;width:3px;height:54px"></div>
<!-- A2 -->
<div class="c" style="left:317px;top:426px;width:4px;height:54px"></div>
<div class="c" style="left:323px;top:426px;width:4px;height:54px"></div>
<div class="c" style="left:330px;top:426px;width:16px;height:54px"></div>
<div class="c" style="left:370px;top:426px;width:4px;height:54px"></div>
<div class="c" style="left:376px;top:426px;width:4px;height:54px"></div>
<div class="c" style="left:382px;top:426px;width:9px;height:54px"></div>
<div class="c" style="left:457px;top:426px;width:54px;height:54px"><span>09...ov</span></div>
<div class="c" style="left:621px;top:426px;width:16px;height:54px"></div>
<div class="c" style="left:905px;top:426px;width:21px;height:54px"></div>
<!-- A3 -->
<div class="c" style="left:232px;top:486px;width:39px;height:54px"><span>Is..._1</span></div>
<div class="c" style="left:355px;top:486px;width:160px;height:54px"><span>Minyo San Ky...Zinger.mp3_1</span></div>
<div class="c" style="left:632px;top:486px;width:276px;height:54px"><span>Clean and Dance - An Jone.mp3_1</span></div>
<div class="c" style="left:922px;top:486px;width:122px;height:54px"><span>Ishikari ...eod.mp3_1</span></div>
<!-- A4 -->
<div class="c" style="left:250px;top:546px;width:64px;height:54px"><span>Clas...p3_1</span></div>
<!-- A5 -->
<div class="c" style="left:306px;top:606px;width:19px;height:25px"></div>
<div class="c" style="left:337px;top:606px;width:19px;height:25px"></div>
<div class="c" style="left:508px;top:606px;width:17px;height:25px"></div>
<div class="c" style="left:527px;top:606px;width:14px;height:25px"></div>
<div class="c" style="left:582px;top:606px;width:29px;height:25px"><span style="bottom:5px">P...L</span></div>
<div class="c" style="left:613px;top:606px;width:29px;height:25px"></div>
<div class="c" style="left:306px;top:635px;width:19px;height:25px"></div>
<div class="c" style="left:337px;top:635px;width:19px;height:25px"></div>
<div class="c" style="left:508px;top:635px;width:17px;height:25px"></div>
<div class="c" style="left:527px;top:635px;width:14px;height:25px"></div>
<div class="c" style="left:582px;top:635px;width:29px;height:25px"><span style="bottom:5px">P...R</span></div>
<div class="c" style="left:613px;top:635px;width:29px;height:25px"></div>
<!-- A6 -->
<div class="c" style="left:314px;top:666px;width:42px;height:25px"><span style="bottom:5px">A0... L</span></div>
<div class="c" style="left:455px;top:666px;width:68px;height:25px"><span style="bottom:5px">A001... - L</span></div>
<div class="c" style="left:901px;top:666px;width:26px;height:25px"><span style="bottom:5px">...</span></div>
<div class="c" style="left:314px;top:695px;width:42px;height:25px"><span style="bottom:5px">A0... R</span></div>
<div class="c" style="left:455px;top:695px;width:68px;height:25px"><span style="bottom:5px">A001... - R</span></div>
<div class="c" style="left:901px;top:695px;width:26px;height:25px"><span style="bottom:5px">...</span></div>
<!-- keyframe dots (local = rel-231, y local = rel-420) -->
<svg class="a" style="left:231px;top:420px" width="900" height="200" viewBox="0 0 900 200" fill="#fff" stroke="#333" stroke-width="0.8">
<circle cx="8" cy="85" r="4"/><path d="M13 88h9v7l-4.5 3-4.5-3z" fill="#e0201a" stroke="none"/>
<circle cx="135" cy="85" r="4"/><circle cx="139" cy="91" r="4"/><circle cx="167" cy="89" r="4"/><circle cx="171" cy="92" r="4"/><circle cx="204" cy="91" r="4"/><circle cx="209" cy="87" r="4"/><circle cx="222" cy="87" r="4"/><circle cx="227" cy="92" r="4"/><circle cx="276" cy="93" r="4"/><circle cx="279" cy="108" r="3"/>
<circle cx="402" cy="86" r="4"/><circle cx="408" cy="85" r="4"/><circle cx="428" cy="86" r="4"/><circle cx="434" cy="92" r="4"/>
<circle cx="698" cy="84" r="4"/><path d="M704 87h10v8l-5 3-5-3z" fill="#e0201a" stroke="none"/>
<circle cx="685" cy="21" r="4"/><circle cx="685" cy="26" r="3"/><circle cx="685" cy="47" r="4"/>
<circle cx="38" cy="143" r="4"/><circle cx="33" cy="150" r="4"/>
</svg>
<!-- playhead -->
<div class="a" style="left:620px;top:327px;width:2px;height:590px;background:#e2423a"></div>
<div class="a" style="left:614px;top:325px;width:14px;height:12px;background:#e2423a;clip-path:polygon(0 0,100% 0,100% 50%,50% 100%,0 50%)"></div>
<div class="a" style="left:232px;top:910px;width:476px;height:6px;border-radius:3px;background:#4a4a50"></div>

<!-- mixer -->
<div class="a" style="left:1129px;top:323px;width:10px;height:595px;background:#141417"></div>
<div class="a" style="left:1139px;top:323px;width:541px;height:595px;background:#1c1c21"></div>
<div class="t" style="left:1147px;top:330px;font-size:12px;font-weight:bold;color:#f0f0f2">Mixer</div>
<div class="t" style="left:1650px;top:324px;font-size:12px;color:#aaa;letter-spacing:1px">•••</div>
<div class="a" style="left:1642px;top:323px;width:1px;height:25px;background:#101013"></div>
<div class="a" style="left:1139px;top:348px;width:541px;height:1px;background:#101013"></div>
<div class="a" style="left:1210px;top:349px;width:470px;height:569px;background:#1f1f24"></div>
<div class="a" style="left:1210px;top:349px;width:402px;height:3px;background:repeating-linear-gradient(90deg,#3c9a5e 0 66px,#1c1c21 66px 67px)"></div>
<div class="a" style="left:1612px;top:349px;width:68px;height:3px;background:#1f7db8"></div>
<div class="lab" style="left:1139px;top:386px">Input</div>
<div class="lab" style="left:1139px;top:413px">Track FX</div>
<div class="lab" style="left:1139px;top:441px">Order</div>
<div class="lab" style="left:1139px;top:475px">Effects</div>
<div class="lab" style="left:1139px;top:515px">Effects In</div>
<div class="lab" style="left:1139px;top:542px">Dynamics</div>
<div class="lab" style="left:1139px;top:610px">EQ</div>
<div class="a" style="left:1210px;top:376px;width:470px;height:1px;background:#121215"></div>
<div class="a" style="left:1210px;top:403px;width:470px;height:1px;background:#121215"></div>
<div class="a" style="left:1210px;top:430px;width:470px;height:1px;background:#121215"></div>
<div class="a" style="left:1210px;top:458px;width:470px;height:1px;background:#121215"></div>
<div class="a" style="left:1210px;top:503px;width:470px;height:1px;background:#121215"></div>
<div class="a" style="left:1210px;top:532px;width:470px;height:1px;background:#121215"></div>
<div class="a" style="left:1210px;top:598px;width:470px;height:1px;background:#121215"></div>
<div class="a" style="left:1210px;top:626px;width:470px;height:1px;background:#121215"></div>
<div class="a" style="left:1210px;top:650px;width:470px;height:1px;background:#121215"></div>
<div class="a" style="left:1210px;top:678px;width:470px;height:1px;background:#121215"></div>
<div class="a" style="left:1210px;top:706px;width:470px;height:1px;background:#121215"></div>
<div class="a" style="left:1210px;top:349px;width:471px;height:569px;background:repeating-linear-gradient(90deg,#111114 0 1px,transparent 1px 67px)"></div>

<div class="a" style="left:1210px;top:352px;width:470px">
<div class="t" style="left:26px;top:8px;font-size:11px;color:#e8e8ea">A1</div>
<div class="t" style="left:93px;top:8px;font-size:11px;color:#e8e8ea">A2</div>
<div class="t" style="left:160px;top:8px;font-size:11px;color:#e8e8ea">A3</div>
<div class="t" style="left:227px;top:8px;font-size:11px;color:#e8e8ea">A4</div>
<div class="t" style="left:294px;top:8px;font-size:11px;color:#e8e8ea">A5</div>
<div class="t" style="left:361px;top:8px;font-size:11px;color:#e8e8ea">A6</div>
<div class="t" style="left:423px;top:8px;font-size:11px;color:#e8e8ea">Bus1</div>
</div>
<div class="mb" style="left:1215px;top:382px">No Input</div><div class="mb" style="left:1282px;top:382px">No Input</div><div class="mb" style="left:1349px;top:382px">No Input</div><div class="mb" style="left:1416px;top:382px">No Input</div><div class="mb" style="left:1483px;top:382px">No Input</div><div class="mb" style="left:1550px;top:382px">No Input</div><div class="mb" style="left:1617px;top:382px"></div>
<div class="mb" style="left:1215px;top:409px;background:#36363c;font-style:italic;color:#8a8a90">Dial Lev</div><div class="mb" style="left:1282px;top:409px;background:#36363c;font-style:italic;color:#8a8a90">Dial Lev</div><div class="mb" style="left:1349px;top:409px;background:#36363c;font-style:italic;color:#8a8a90">Dial Lev</div><div class="mb" style="left:1416px;top:409px;background:#36363c;font-style:italic;color:#8a8a90">Dial Lev</div><div class="mb" style="left:1483px;top:409px;background:#36363c;font-style:italic;color:#8a8a90">Dial Lev</div><div class="mb" style="left:1550px;top:409px;background:#36363c;font-style:italic;color:#8a8a90">Dial Lev</div>
<div class="mb" style="left:1215px;top:437px;font-style:italic;font-weight:bold;font-size:9.5px;padding-left:5px"><span style="color:#e8a010">FX</span> <span style="color:#d8c810">DY</span> <span style="color:#20c0e0">EQ</span></div>
<div class="mb" style="left:1282px;top:437px;font-style:italic;font-weight:bold;font-size:9.5px;padding-left:5px"><span style="color:#e8a010">FX</span> <span style="color:#d8c810">DY</span> <span style="color:#20c0e0">EQ</span></div>
<div class="mb" style="left:1349px;top:437px;font-style:italic;font-weight:bold;font-size:9.5px;padding-left:5px"><span style="color:#e8a010">FX</span> <span style="color:#d8c810">DY</span> <span style="color:#20c0e0">EQ</span></div>
<div class="mb" style="left:1416px;top:437px;font-style:italic;font-weight:bold;font-size:9.5px;padding-left:5px"><span style="color:#e8a010">FX</span> <span style="color:#d8c810">DY</span> <span style="color:#20c0e0">EQ</span></div>
<div class="mb" style="left:1483px;top:437px;font-style:italic;font-weight:bold;font-size:9.5px;padding-left:5px"><span style="color:#e8a010">FX</span> <span style="color:#d8c810">DY</span> <span style="color:#20c0e0">EQ</span></div>
<div class="mb" style="left:1550px;top:437px;font-style:italic;font-weight:bold;font-size:9.5px;padding-left:5px"><span style="color:#e8a010">FX</span> <span style="color:#d8c810">DY</span> <span style="color:#20c0e0">EQ</span></div>
<div class="mb" style="left:1215px;top:462px;color:#d8a020">AUGrap...</div><div class="mb" style="left:1282px;top:462px;color:#d8a020">AUGrap...</div>
<div class="mb" style="left:1215px;top:481px;text-align:center;padding:0;color:#aaa">+</div><div class="mb" style="left:1282px;top:481px;text-align:center;padding:0;color:#aaa">+</div><div class="mb" style="left:1349px;top:481px;text-align:center;padding:0;color:#aaa">+</div><div class="mb" style="left:1416px;top:481px;text-align:center;padding:0;color:#aaa">+</div><div class="mb" style="left:1483px;top:481px;text-align:center;padding:0;color:#aaa">+</div><div class="mb" style="left:1550px;top:481px;text-align:center;padding:0;color:#aaa">+</div><div class="mb" style="left:1617px;top:481px;text-align:center;padding:0;color:#aaa">+</div>
<div class="rs" style="left:1235px;top:509px;background:#b8900e;color:#f4e4a0">In</div><div class="rs" style="left:1302px;top:509px;background:#b8900e;color:#f4e4a0">In</div><div class="rs" style="left:1369px;top:509px">In</div><div class="rs" style="left:1436px;top:509px">In</div><div class="rs" style="left:1503px;top:509px">In</div><div class="rs" style="left:1570px;top:509px">In</div><div class="rs" style="left:1637px;top:509px">In</div>
<svg class="a" style="left:1210px;top:536px" width="470" height="58" viewBox="0 0 470 58" fill="none">
<g stroke="#2e2e34"><rect x="5.5" y="0.5" width="55" height="56" rx="3" fill="#18181c" stroke="#333"/><rect x="72.5" y="0.5" width="55" height="56" rx="3" fill="#18181c" stroke="#333"/><rect x="139.5" y="0.5" width="55" height="56" rx="3" fill="#18181c" stroke="#333"/><rect x="206.5" y="0.5" width="55" height="56" rx="3" fill="#18181c" stroke="#333"/><rect x="273.5" y="0.5" width="55" height="56" rx="3" fill="#18181c" stroke="#333"/><rect x="340.5" y="0.5" width="55" height="56" rx="3" fill="#18181c" stroke="#333"/><rect x="407.5" y="0.5" width="55" height="56" rx="3" fill="#18181c" stroke="#333"/>
<path d="M33 1v56M6 29h54M100 1v56M73 29h54M167 1v56M140 29h54M234 1v56M207 29h54M301 1v56M274 29h54M368 1v56M341 29h54M435 1v56M408 29h54"/></g>
<g stroke="#c8e000" stroke-width="1.3"><path d="M8 54L58 3M75 54L125 3M142 54L192 3M209 54L259 3M276 54L326 3M343 54L393 3M410 54L460 3"/></g>
</svg>
<div class="a" style="left:1210px;top:603px;width:470px;height:21px;background:repeating-linear-gradient(90deg,transparent 0 5px,#18181c 5px 60px,transparent 60px 67px)"></div>
<div class="a" style="left:1210px;top:616px;width:470px;height:2px;background:repeating-linear-gradient(90deg,transparent 0 5px,#1fb8d8 5px 60px,transparent 60px 67px)"></div>
<div class="a" style="left:1210px;top:633px;width:470px;font-size:11px;color:#e8e8ea">
<div class="t" style="left:0;width:67px;text-align:center;color:#e8a317">Voz en off</div>
<div class="t" style="left:67px;width:67px;text-align:center">Voz</div>
<div class="t" style="left:134px;width:67px;text-align:center">Musica</div>
<div class="t" style="left:201px;width:67px;text-align:center">Musica 2</div>
<div class="t" style="left:268px;width:67px;text-align:center;font-size:10.5px">FXAmbient1</div>
<div class="t" style="left:335px;width:67px;text-align:center;font-size:10.5px">FXAmbient2</div>
<div class="t" style="left:402px;width:67px;text-align:center">Bus 1</div>
</div>
<div class="a" style="left:1210px;top:656px;width:470px;height:18px">
<div class="rs" style="left:6px">R</div><div class="rs" style="left:25px">S</div><div class="rs" style="left:44px">M</div>
<div class="rs" style="left:73px">R</div><div class="rs" style="left:92px">S</div><div class="rs" style="left:111px">M</div>
<div class="rs" style="left:140px">R</div><div class="rs" style="left:159px">S</div><div class="rs" style="left:178px">M</div>
<div class="rs" style="left:207px">R</div><div class="rs" style="left:226px">S</div><div class="rs" style="left:245px">M</div>
<div class="rs" style="left:274px">R</div><div class="rs" style="left:293px">S</div><div class="rs" style="left:312px">M</div>
<div class="rs" style="left:341px">R</div><div class="rs" style="left:360px">S</div><div class="rs" style="left:379px">M</div>
<div class="rs" style="left:427px">M</div>
</div>
<svg class="a" style="left:1210px;top:684px" width="470" height="18" viewBox="0 0 470 18" fill="none" stroke="#999" stroke-width="1.1">
<path d="M25 12l5-6 6 6 4 2"/><circle cx="30" cy="6" r="1.5"/><circle cx="41" cy="14" r="1.5"/>
<path d="M92 12l5-6 6 6 4 2"/><circle cx="97" cy="6" r="1.5"/><circle cx="108" cy="14" r="1.5"/>
<path d="M159 12l5-6 6 6 4 2"/><circle cx="164" cy="6" r="1.5"/><circle cx="175" cy="14" r="1.5"/>
<path d="M226 12l5-6 6 6 4 2"/><circle cx="231" cy="6" r="1.5"/><circle cx="242" cy="14" r="1.5"/>
<path d="M293 12l5-6 6 6 4 2"/><circle cx="298" cy="6" r="1.5"/><circle cx="309" cy="14" r="1.5"/>
<path d="M360 12l5-6 6 6 4 2"/><circle cx="365" cy="6" r="1.5"/><circle cx="376" cy="14" r="1.5"/>
<path d="M427 12l5-6 6 6 4 2"/><circle cx="432" cy="6" r="1.5"/><circle cx="443" cy="14" r="1.5"/>
</svg>
<!-- faders -->
<div class="a" style="left:1210px;top:706px;width:470px;height:212px">
 <div class="t" style="left:7px;top:5px;font-size:9.5px;color:#eee">+10</div>
 <div class="t" style="left:74px;top:5px;font-size:9.5px;color:#eee">-5.5</div>
 <div class="t" style="left:141px;top:5px;font-size:9.5px;color:#eee">-3.3</div>
 <div class="t" style="left:208px;top:5px;font-size:9.5px;color:#eee">-3.3</div>
 <div class="t" style="left:276px;top:5px;font-size:9.5px;color:#eee">0.0</div>
 <div class="t" style="left:343px;top:5px;font-size:9.5px;color:#eee">0.0</div>
 <div class="t" style="left:409px;top:5px;font-size:9.5px;color:#eee">+7.7</div>
 <div class="a" style="left:0;top:26px;width:470px;height:166px;background:repeating-linear-gradient(90deg,transparent 0 15px,#0a0a0c 15px 18px,transparent 18px 67px)"></div>
 <div class="a" style="left:0;top:25px;width:470px;height:170px;background:repeating-linear-gradient(90deg,transparent 0 44px,#060608 44px 45px,#151518 45px 54px,#060608 54px 55px,transparent 55px 67px)"></div>
 <div class="a" style="left:0;top:15px;width:470px;height:2px;background:repeating-linear-gradient(90deg,transparent 0 44px,#060608 44px 55px,transparent 55px 67px)"></div>
</div>
<div class="a" style="left:1210px;top:727px;width:470px;height:180px;font-size:9px;color:#777;line-height:1">
 <div class="a" style="left:0;top:0"><div class="sc" style="left:18px;top:0">0 -</div><div class="sc" style="left:18px;top:22px">-5 -</div><div class="sc" style="left:18px;top:43px">-10 -</div><div class="sc" style="left:18px;top:64px">-15 -</div><div class="sc" style="left:18px;top:85px">-20 -</div><div class="sc" style="left:18px;top:119px">-30 -</div><div class="sc" style="left:18px;top:145px">-40 -</div><div class="sc" style="left:18px;top:158px">-50 -</div></div>
 <div class="a" style="left:67px;top:0"><div class="sc" style="left:18px;top:0">0 -</div><div class="sc" style="left:18px;top:22px">-5 -</div><div class="sc" style="left:18px;top:43px">-10 -</div><div class="sc" style="left:18px;top:64px">-15 -</div><div class="sc" style="left:18px;top:85px">-20 -</div><div class="sc" style="left:18px;top:119px">-30 -</div><div class="sc" style="left:18px;top:145px">-40 -</div><div class="sc" style="left:18px;top:158px">-50 -</div></div>
 <div class="a" style="left:134px;top:0"><div class="sc" style="left:18px;top:0">0 -</div><div class="sc" style="left:18px;top:22px">-5 -</div><div class="sc" style="left:18px;top:43px">-10 -</div><div class="sc" style="left:18px;top:64px">-15 -</div><div class="sc" style="left:18px;top:85px">-20 -</div><div class="sc" style="left:18px;top:119px">-30 -</div><div class="sc" style="left:18px;top:145px">-40 -</div><div class="sc" style="left:18px;top:158px">-50 -</div></div>
 <div class="a" style="left:201px;top:0"><div class="sc" style="left:18px;top:0">0 -</div><div class="sc" style="left:18px;top:22px">-5 -</div><div class="sc" style="left:18px;top:43px">-10 -</div><div class="sc" style="left:18px;top:64px">-15 -</div><div class="sc" style="left:18px;top:85px">-20 -</div><div class="sc" style="left:18px;top:119px">-30 -</div><div class="sc" style="left:18px;top:145px">-40 -</div><div class="sc" style="left:18px;top:158px">-50 -</div></div>
 <div class="a" style="left:268px;top:0"><div class="sc" style="left:18px;top:0">0 -</div><div class="sc" style="left:18px;top:22px">-5 -</div><div class="sc" style="left:18px;top:43px">-10 -</div><div class="sc" style="left:18px;top:64px">-15 -</div><div class="sc" style="left:18px;top:85px">-20 -</div><div class="sc" style="left:18px;top:119px">-30 -</div><div class="sc" style="left:18px;top:145px">-40 -</div><div class="sc" style="left:18px;top:158px">-50 -</div></div>
 <div class="a" style="left:335px;top:0"><div class="sc" style="left:18px;top:0">0 -</div><div class="sc" style="left:18px;top:22px">-5 -</div><div class="sc" style="left:18px;top:43px">-10 -</div><div class="sc" style="left:18px;top:64px">-15 -</div><div class="sc" style="left:18px;top:85px">-20 -</div><div class="sc" style="left:18px;top:119px">-30 -</div><div class="sc" style="left:18px;top:145px">-40 -</div><div class="sc" style="left:18px;top:158px">-50 -</div></div>
 <div class="a" style="left:402px;top:0"><div class="sc" style="left:18px;top:0">0 -</div><div class="sc" style="left:18px;top:22px">-5 -</div><div class="sc" style="left:18px;top:43px">-10 -</div><div class="sc" style="left:18px;top:64px">-15 -</div><div class="sc" style="left:18px;top:85px">-20 -</div><div class="sc" style="left:18px;top:119px">-30 -</div><div class="sc" style="left:18px;top:145px">-40 -</div><div class="sc" style="left:18px;top:158px">-50 -</div></div>
</div>
<div class="a" style="left:1214px;top:770px;width:470px;height:2px;background:repeating-linear-gradient(90deg,#ddd 0 5px,transparent 5px 67px)"></div>
<div class="a" style="left:1214px;top:731px;width:470px;height:165px;background:repeating-linear-gradient(90deg,rgba(90,90,96,.7) 0 4px,transparent 4px 67px);-webkit-mask:repeating-linear-gradient(180deg,#000 0 1px,transparent 1px 21px);mask:repeating-linear-gradient(180deg,#000 0 1px,transparent 1px 21px)"></div>
<div class="a" style="left:1221px;top:723px;width:12px;height:20px;border-radius:2px;background:linear-gradient(180deg,#e0e0e0,#8a8a8a)"></div>
<div class="a" style="left:1288px;top:791px;width:12px;height:20px;border-radius:2px;background:linear-gradient(180deg,#e0e0e0,#8a8a8a)"></div>
<div class="a" style="left:1355px;top:781px;width:12px;height:20px;border-radius:2px;background:linear-gradient(180deg,#e0e0e0,#8a8a8a)"></div>
<div class="a" style="left:1422px;top:781px;width:12px;height:20px;border-radius:2px;background:linear-gradient(180deg,#e0e0e0,#8a8a8a)"></div>
<div class="a" style="left:1489px;top:766px;width:12px;height:20px;border-radius:2px;background:linear-gradient(180deg,#e0e0e0,#8a8a8a)"></div>
<div class="a" style="left:1556px;top:766px;width:12px;height:20px;border-radius:2px;background:linear-gradient(180deg,#e0e0e0,#8a8a8a)"></div>
<div class="a" style="left:1623px;top:732px;width:12px;height:20px;border-radius:2px;background:linear-gradient(180deg,#e0e0e0,#8a8a8a)"></div>

<!-- bottom bar -->
<div class="a" style="left:0;top:918px;width:1680px;height:33px;background:#141417"></div>
<svg class="a" style="left:22px;top:925px" width="18" height="16" viewBox="0 0 18 16" fill="#eee"><circle cx="9" cy="4" r="3.4"/><circle cx="4" cy="12" r="3.4"/><circle cx="14" cy="12" r="3.4"/></svg>
<div class="t" style="left:46px;top:927px;font-size:12px;font-weight:bold;color:#e8e8ea;letter-spacing:.3px">DaVinci Resolve 19</div>
<svg class="a" style="left:470px;top:925px" width="700" height="20" viewBox="0 0 700 20" fill="none" stroke="#777" stroke-width="1.2">
<rect x="3" y="4" width="14" height="12"/><path d="M5 2h10M5 13l3-3 3 3 3-3"/>
<path d="M122 4h14l-2 12h-14zM116 8h5M115 11h5"/>
<path d="M242 3v14M238 6h8M238 14h8M234 10h16M236 10v4M248 6v4"/>
<path d="M356 16l10-12 2 2-10 12zM352 10h4M354 6l3 2"/>
<circle cx="485" cy="10" r="2"/><circle cx="485" cy="3" r="1"/><circle cx="485" cy="17" r="1"/><circle cx="478" cy="10" r="1"/><circle cx="492" cy="10" r="1"/><circle cx="480" cy="5" r="1"/><circle cx="490" cy="15" r="1"/><circle cx="490" cy="5" r="1"/><circle cx="480" cy="15" r="1"/>
<path d="M605 4l5-1v9M600 12a2.5 2.5 0 105 0v-7" stroke="#2fd36a" stroke-width="1.6"/><circle cx="602.5" cy="12.5" r="2.5" stroke="#2fd36a"/><circle cx="607.5" cy="12.5" r="2.5" stroke="#2fd36a"/>
<path d="M722 16l3-6 6-6 4-1-1 4-6 6zM721 12l-2 2 3 1M728 15l-1 3"/>
</svg>
<div class="a" style="left:1021px;top:948px;width:98px;height:2px;background:#e2423a"></div>
<svg class="a" style="left:1588px;top:926px" width="16" height="16" viewBox="0 0 16 16" fill="#bbb"><path d="M8 1l7 7h-2v7h-4v-4H7v4H3V8H1z"/></svg>
<svg class="a" style="left:1636px;top:925px" width="18" height="18" viewBox="0 0 18 18" fill="none" stroke="#bbb" stroke-width="2"><circle cx="9" cy="9" r="3.5"/><path d="M9 1v3M9 14v3M1 9h3M14 9h3M3.3 3.3l2.1 2.1M12.6 12.6l2.1 2.1M3.3 14.7l2.1-2.1M12.6 5.4l2.1-2.1"/></svg>
</div>
</body></html>
